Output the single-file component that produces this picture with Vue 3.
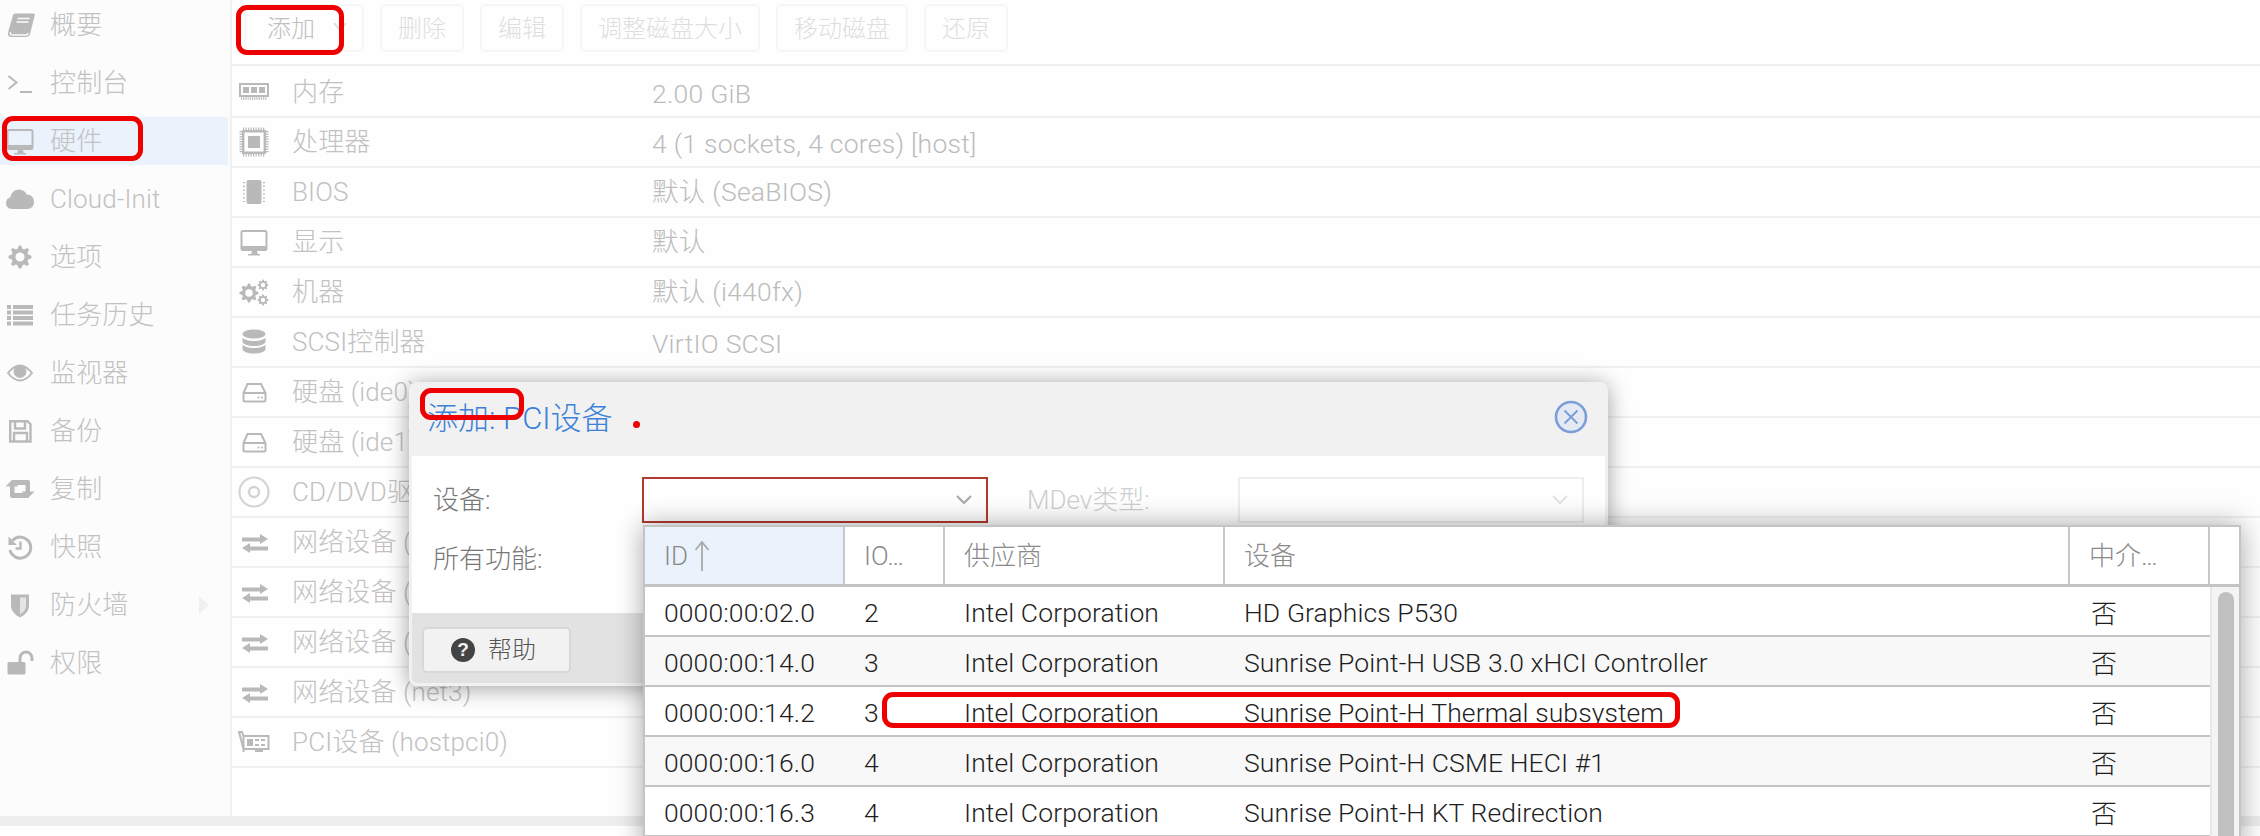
<script setup>
function gear(cx, cy, r, teeth) {
  const out = r, inn = r * 0.74, hole = r * 0.4
  let d = ''
  const n = teeth * 4
  for (let i = 0; i < n; i++) {
    const a = (i / n) * Math.PI * 2 - Math.PI / teeth / 4
    const rad = i % 4 < 2 ? out : inn
    d += (i ? 'L' : 'M') + (cx + rad * Math.cos(a)).toFixed(2) + ' ' + (cy + rad * Math.sin(a)).toFixed(2)
  }
  d += 'Z'
  d += `M${cx + hole} ${cy}a${hole} ${hole} 0 1 0 ${-2 * hole} 0a${hole} ${hole} 0 1 0 ${2 * hole} 0Z`
  return d
}
const gearOne = gear(16, 16, 11.5, 8)
const gearMany = gear(11, 17, 9.5, 8) + gear(25, 9, 5.5, 8) + gear(25, 24, 5.5, 8)
const cjk = (s) => /[\u4e00-\u9fff]/.test(s)

const navItems = [
  { icon: 'book', text: '概要' },
  { icon: 'console', text: '控制台' },
  { icon: 'desktop', text: '硬件', active: true },
  { icon: 'cloud', text: 'Cloud-Init' },
  { icon: 'gear', text: '选项' },
  { icon: 'list', text: '任务历史' },
  { icon: 'eye', text: '监视器' },
  { icon: 'save', text: '备份' },
  { icon: 'retweet', text: '复制' },
  { icon: 'history', text: '快照' },
  { icon: 'shield', text: '防火墙', arrow: true },
  { icon: 'unlock', text: '权限' }
]
const tools = ['删除', '编辑', '调整磁盘大小', '移动磁盘', '还原']
const hw = [
  ['ram', '内存', '2.00 GiB'],
  ['cpu', '处理器', '4 (1 sockets, 4 cores) [host]'],
  ['bios', 'BIOS', '默认 (SeaBIOS)'],
  ['desktop', '显示', '默认'],
  ['gears', '机器', '默认 (i440fx)'],
  ['db', 'SCSI控制器', 'VirtIO SCSI'],
  ['hdd', '硬盘 (ide0)', ''],
  ['hdd', '硬盘 (ide1)', ''],
  ['cd', 'CD/DVD驱动器 (ide2)', ''],
  ['net', '网络设备 (net0)', ''],
  ['net', '网络设备 (net1)', ''],
  ['net', '网络设备 (net2)', ''],
  ['net', '网络设备 (net3)', ''],
  ['pci', 'PCI设备 (hostpci0)', '']
]
const devices = [
  ['0000:00:02.0', '2', 'HD Graphics P530'],
  ['0000:00:14.0', '3', 'Sunrise Point-H USB 3.0 xHCI Controller'],
  ['0000:00:14.2', '3', 'Sunrise Point-H Thermal subsystem'],
  ['0000:00:16.0', '4', 'Sunrise Point-H CSME HECI #1'],
  ['0000:00:16.3', '4', 'Sunrise Point-H KT Redirection']
]
</script>

<template>
  <div class="page">
    <svg class="defs" aria-hidden="true">
      <symbol id="i-book" viewBox="0 0 32 32">
        <path fill="currentColor" d="M11 4.500h18.500c1 0 1.500.8 1.200 2L26 25c-.6 2-2 3-4 3H7c-2 0-3.500-2-3-4.500L9 6.300c.3-1 1-1.800 2-1.800z" />
        <path fill="none" stroke="#fcfcfc" stroke-width="1.500" d="M13.500 9.500h12M12.500 13h12M6.500 23c-.6 2 .2 3 1.500 3h14c1.200 0 1.800-.6 2.200-2" />
      </symbol>
      <symbol id="i-console" viewBox="0 0 32 32">
        <path fill="none" stroke="currentColor" stroke-width="2" d="M4.500 9l8 6.500-8 6.500M16 25h12" />
      </symbol>
      <symbol id="i-desktop" viewBox="0 0 32 32">
        <path fill="currentColor" fill-rule="evenodd" d="M5 4h22a2.500 2.500 0 0 1 2.500 2.500v16a2.500 2.500 0 0 1-2.500 2.500h-8l.8 3H22v1.500H10V28h3.200l.8-3H5a2.500 2.500 0 0 1-2.500-2.500v-16A2.500 2.500 0 0 1 5 4zM4.500 6v14h23V6z" />
      </symbol>
      <symbol id="i-cloud" viewBox="0 0 32 32">
        <path fill="currentColor" d="M8 26C4 26 2 23 2 20c0-2.800 1.800-5 4.400-5.700C7 9.800 10.600 6.500 15 6.500c3.600 0 6.600 2.100 8 5.200 4.300-.5 7 3 7 7.300 0 4-2.800 7-6.500 7z" />
      </symbol>
      <symbol id="i-gear" viewBox="0 0 32 32"><path fill="currentColor" fill-rule="evenodd" :d="gearOne" /></symbol>
      <symbol id="i-gears" viewBox="0 0 32 32"><path fill="currentColor" fill-rule="evenodd" :d="gearMany" /></symbol>
      <symbol id="i-list" viewBox="0 0 32 32">
        <path fill="currentColor" d="M3 6h4v4H3zM9 6h20v4H9zM3 11.500h4v4H3zM9 11.500h20v4H9zM3 17h4v4H3zM9 17h20v4H9zM3 22.500h4v4H3zM9 22.500h20v4H9z" />
      </symbol>
      <symbol id="i-eye" viewBox="0 0 32 32">
        <path fill="none" stroke="currentColor" stroke-width="2" d="M4 16c4-5 7.500-7.500 12-7.500S24 11 28 16c-4 5-7.500 7.500-12 7.500S8 21 4 16z" />
        <circle cx="16" cy="14.500" r="6.500" fill="currentColor" />
      </symbol>
      <symbol id="i-save" viewBox="0 0 32 32">
        <path fill="none" stroke="currentColor" stroke-width="2.400" d="M6.200 6.200h17.300l3 3v17.300H6.200zM11 6.500v7h10v-7M10 26v-8h13v8" />
      </symbol>
      <symbol id="i-retweet" viewBox="0 0 32 32">
        <path fill="currentColor" d="M8 7l6.500 6.500h-4V20H20l4 5H8a2 2 0 0 1-2-2V13.500H1.500zM24 25l-6.500-6.500h4V12H12L8 7h16a2 2 0 0 1 2 2v9.500h4.500z" />
      </symbol>
      <symbol id="i-history" viewBox="0 0 32 32">
        <path fill="none" stroke="currentColor" stroke-width="3" d="M8.500 9.500A10.500 10.500 0 1 1 6 19" />
        <path fill="currentColor" d="M4.500 5.500v8.500h8.500z" />
        <path fill="none" stroke="currentColor" stroke-width="2.400" d="M16.500 10.500v7h-5" />
      </symbol>
      <symbol id="i-shield" viewBox="0 0 32 32">
        <path fill="currentColor" d="M7 5.500h18v11c0 6-4.500 9.500-9 12-4.500-2.500-9-6-9-12z" />
        <path fill="#fcfcfc" fill-opacity=".65" d="M16 8.500v16.800c3-1.800 6-4.300 6-8.800V8.500z" />
      </symbol>
      <symbol id="i-unlock" viewBox="0 0 32 32">
        <path fill="currentColor" d="M5 15h15a1.500 1.500 0 0 1 1.500 1.500V26a1.500 1.500 0 0 1-1.500 1.500H5A1.500 1.500 0 0 1 3.500 26v-9.500A1.500 1.500 0 0 1 5 15z" />
        <path fill="none" stroke="currentColor" stroke-width="3" d="M16 16v-5a6 6 0 0 1 12 0v3" />
      </symbol>
      <symbol id="i-ram" viewBox="0 0 32 32">
        <path fill="currentColor" fill-rule="evenodd" d="M1 7h30v14H1zM3 9v10h26V9z" />
        <path fill="currentColor" d="M5 11h6v6H5zM13 11h6v6h-6zM21 11h6v6h-6z" />
        <path fill="none" stroke="currentColor" stroke-width="2.500" stroke-dasharray="1.200 1" d="M3 22.500h26" />
      </symbol>
      <symbol id="i-cpu" viewBox="0 0 32 32">
        <path fill="none" stroke="currentColor" stroke-width="2.400" d="M5.200 5.200h21.600v21.600H5.200z" />
        <path fill="currentColor" d="M10 10h12v12H10z" />
        <path fill="none" stroke="currentColor" stroke-width="2.600" stroke-dasharray="1.200 1.300" d="M5 2.800h22M5 29.200h22M2.800 5v22M29.200 5v22" />
      </symbol>
      <symbol id="i-bios" viewBox="0 0 32 32">
        <rect x="8.500" y="4" width="15" height="24" rx="2" fill="currentColor" />
        <path fill="none" stroke="currentColor" stroke-width="2" stroke-dasharray="1.200 2.600" d="M6 6v20M26 6v20" />
      </symbol>
      <symbol id="i-db" viewBox="0 0 32 32">
        <ellipse cx="16" cy="8" rx="11.500" ry="4.500" fill="currentColor" />
        <path fill="currentColor" d="M4.500 11.500c1.500 2 6 3.500 11.500 3.500s10-1.500 11.500-3.500v4c0 2.500-5 4.500-11.500 4.500s-11.500-2-11.500-4.500zM4.500 18.500c1.500 2 6 3.500 11.500 3.500s10-1.500 11.500-3.500v4.500c0 2.500-5 4.500-11.500 4.500S4.500 25.500 4.500 23z" />
      </symbol>
      <symbol id="i-hdd" viewBox="0 0 32 32">
        <path fill="none" stroke="currentColor" stroke-width="2" d="M9.500 8h13.500l4.500 9v7a1.500 1.500 0 0 1-1.500 1.500H7A1.500 1.500 0 0 1 5.500 24v-7zM5.500 17h22" />
        <circle cx="20.500" cy="21.500" r="1" fill="currentColor" />
        <circle cx="24" cy="21.500" r="1" fill="currentColor" />
      </symbol>
      <symbol id="i-cd" viewBox="0 0 32 32">
        <circle cx="16" cy="16" r="14.500" fill="none" stroke="currentColor" stroke-width="2.200" />
        <circle cx="16" cy="16" r="5" fill="none" stroke="currentColor" stroke-width="2.400" />
      </symbol>
      <symbol id="i-net" viewBox="0 0 32 32">
        <path fill="currentColor" d="M4 11.500h18V8l8 5-8 5v-2.500H4zM30 20.500H12V17l-8 5 8 5v-2.500h18z" />
      </symbol>
      <symbol id="i-pci" viewBox="0 0 32 32">
        <path fill="none" stroke="currentColor" stroke-width="2" d="M1 6h3l1.500 4h25v13H5.500zM5.500 10v16" />
        <path fill="currentColor" d="M9 13h6v7H9zM17 13h4v2h-4zM23 13h4v2h-4zM17 18h4v2h-4zM23 18h4v2h-4zM17 23h8v3h-8z" />
      </symbol>
    </svg>

    <div class="workspace">
      <nav class="side">
        <div v-for="n in navItems" :key="n.text" class="nav" :class="{ on: n.active }">
          <svg class="ic"><use :href="'#i-' + n.icon" /></svg>
          <span class="nav-text" :class="{ up: cjk(n.text) }">{{ n.text }}</span>
          <span v-if="n.arrow" class="tri"></span>
        </div>
      </nav>
      <section class="main">
        <div class="toolbar">
          <div class="tbtn add">添加<svg class="tchev" viewBox="0 0 14 10"><path d="M1 1l6 7 6-7" fill="none" stroke="#ddd" stroke-width="1.800" /></svg></div>
          <div v-for="t in tools" :key="t" class="tbtn">{{ t }}</div>
        </div>
        <div v-for="(r, i) in hw" :key="i" class="hw">
          <svg class="ic" :class="{ cdi: r[0] === 'cd' }"><use :href="'#i-' + r[0]" /></svg>
          <span class="hw-label" :class="{ up: cjk(r[1]) }">{{ r[1] }}</span>
          <span class="hw-value" :class="cjk(r[2]) ? 'up' : 'down'">{{ r[2] }}</span>
        </div>
      </section>
    </div>
    <div class="strip"></div>

    <div class="dialog">
      <header class="dlg-head">
        <span class="dlg-title">添加: PCI设备</span>
        <svg class="dlg-close" viewBox="0 0 34 34">
          <circle cx="17" cy="17" r="15" fill="#e4e9f4" stroke="#7b9dd8" stroke-width="2.600" />
          <path d="M10.500 10.500l13 13M23.500 10.500l-13 13" stroke="#7b9dd8" stroke-width="1.800" />
        </svg>
      </header>
      <div class="dlg-body">
        <div class="frow">
          <label class="flabel">设备:</label>
          <div class="combo invalid">
            <svg class="chev" viewBox="0 0 16 10"><path d="M1 1l7 7 7-7" fill="none" stroke="#aaa" stroke-width="2.200" /></svg>
          </div>
          <label class="flabel mdev">MDev类型:</label>
          <div class="combo off">
            <svg class="chev" viewBox="0 0 16 10"><path d="M1 1l7 7 7-7" fill="none" stroke="#e4e4e4" stroke-width="2" /></svg>
          </div>
        </div>
        <div class="frow second"><label class="flabel">所有功能:</label></div>
      </div>
      <footer class="dlg-foot">
        <div class="help"><span class="q">?</span><span class="help-text">帮助</span></div>
      </footer>
    </div>

    <div class="drop">
      <div class="dhead">
        <div class="dh sorted">ID<svg class="sort" viewBox="0 0 16 32"><path d="M8 31V2M1.500 10L8 2l6.500 8" fill="none" stroke="#aaa" stroke-width="1.800" /></svg></div>
        <div class="dh">IO…</div>
        <div class="dh"><span class="up">供应商</span></div>
        <div class="dh"><span class="up">设备</span></div>
        <div class="dh"><span class="up">中介…</span></div>
        <div class="dh last"></div>
      </div>
      <div class="dbody">
        <div class="drows">
          <div v-for="d in devices" :key="d[0]" class="drow">
            <span>{{ d[0] }}</span>
            <span>{{ d[1] }}</span>
            <span>Intel Corporation</span>
            <span>{{ d[2] }}</span>
            <span class="no">否</span>
          </div>
        </div>
        <div class="track"><div class="thumb"></div></div>
      </div>
    </div>

    <i class="mark m-add"></i>
    <i class="mark m-hw"></i>
    <i class="mark m-title"></i>
    <i class="dot"></i>
    <i class="mark m-row"></i>
  </div>
</template>

<style scoped>
.page {
  position: relative;
  width: 2260px;
  height: 836px;
  overflow: hidden;
  background: #fff;
  font-family: Roboto, "Liberation Sans", "Noto Sans CJK SC", sans-serif;
  font-weight: 300;
  font-size: 26px;
  color: #222;
}
.defs { position: absolute; width: 0; height: 0; }
.workspace { display: flex; height: 816px; overflow: hidden; }
.strip { height: 10px; background: #eeeeee; }
.ic { width: 32px; height: 32px; flex: none; color: #b9b9b9; }
.up { padding-bottom: 5px; }
.down { padding-top: 2px; }

.side {
  width: 230px;
  flex: none;
  padding-top: 1px;
  background: #fcfcfc;
  border-right: 2px solid #f0f0f0;
  display: flex;
  flex-direction: column;
  gap: 10px;
}
.nav {
  height: 48px;
  width: 228px;
  display: flex;
  align-items: center;
  padding-left: 4px;
  box-sizing: border-box;
  gap: 14px;
  color: #c2c2c2;
  flex: none;
}
.nav.on { background: #eaf2fb; }
.nav-text { flex: none; width: 135px; letter-spacing: 0.15px; }
.tri {
  width: 0;
  height: 0;
  border-left: 10px solid #f0f0f0;
  border-top: 9px solid transparent;
  border-bottom: 9px solid transparent;
}

.main { flex: 1; background: #fefefe; }
.toolbar {
  height: 60px;
  padding: 4px 0 0 12px;
  display: flex;
  gap: 16px;
  border-bottom: 2px solid #efefef;
  margin-bottom: 2px;
}
.tbtn {
  height: 48px;
  box-sizing: border-box;
  padding: 0 16px 3px;
  border: 2px solid #f6f6f6;
  border-radius: 5px;
  display: flex;
  align-items: center;
  font-size: 24px;
  color: #dedede;
  white-space: nowrap;
}
.tbtn.add { width: 120px; padding: 0 8px 3px 21px; color: #c0c0c0; gap: 18px; }
.tchev { width: 14px; height: 10px; flex: none; }
.hw {
  height: 50px;
  box-sizing: border-box;
  border-bottom: 2px solid #f0f0f0;
  display: flex;
  align-items: center;
  padding-left: 6px;
  color: #c2c2c2;
}
.hw .ic { margin-right: 22px; }
.hw-label { width: 360px; flex: none; letter-spacing: 0.15px; }
.hw-value { color: #bcbcbc; font-size: 26.500px; letter-spacing: 0.25px; }
.cdi { color: #d4d4d4; }

.dialog {
  position: absolute;
  left: 409px;
  top: 382px;
  width: 1199px;
  height: 304px;
  box-sizing: border-box;
  display: flex;
  flex-direction: column;
  background: #f1f1f1;
  border-radius: 8px;
  border: solid #f1f1f1;
  border-width: 0 3px 3px;
  box-shadow: 0 2px 22px rgba(0, 0, 0, 0.38);
  overflow: hidden;
}
.dlg-head {
  height: 74px;
  flex: none;
  display: flex;
  align-items: center;
  justify-content: space-between;
  padding: 0 17px 4px 15px;
  box-sizing: border-box;
}
.dlg-title { font-size: 31px; color: #3d82d8; padding-bottom: 4px; }
.dlg-close { width: 34px; height: 34px; }
.dlg-body { flex: 1; background: #fff; padding: 21px 0 0 21px; }
.frow { display: flex; align-items: center; height: 46px; }
.frow.second { margin-top: 13px; }
.flabel { width: 209px; flex: none; color: #777; font-size: 26px; padding-bottom: 5px; box-sizing: border-box; }
.flabel.mdev { width: 209px; margin-left: 39px; margin-right: 2px; color: #cfcfcf; }
.combo {
  width: 346px;
  height: 46px;
  box-sizing: border-box;
  border: 2px solid;
  display: flex;
  align-items: center;
  justify-content: flex-end;
  padding-right: 14px;
  background: #fff;
}
.combo.invalid { border-color: #b23a2e; }
.combo.off { border-color: #eeeeee; }
.chev { width: 16px; height: 10px; }
.dlg-foot {
  height: 70px;
  flex: none;
  background: #e2e2e2;
  padding: 14px 0 0 10px;
  box-sizing: border-box;
}
.help {
  width: 149px;
  height: 46px;
  box-sizing: border-box;
  border: 2px solid #d8d8d8;
  border-radius: 5px;
  background: #f2f2f2;
  display: flex;
  align-items: center;
  padding-left: 27px;
  gap: 13px;
  font-size: 24px;
  color: #555;
}
.help-text { padding-bottom: 5px; }
.q {
  width: 24px;
  height: 24px;
  border-radius: 50%;
  background: #444;
  color: #f2f2f2;
  font: 700 19px/24px "Liberation Sans", sans-serif;
  text-align: center;
  flex: none;
}

.drop {
  position: absolute;
  left: 643px;
  top: 525px;
  width: 1598px;
  height: 330px;
  box-sizing: border-box;
  border: 2px solid #c4c4c4;
  background: #fff;
  box-shadow: 0 0 26px rgba(0, 0, 0, 0.35);
}
.dhead {
  display: grid;
  grid-template-columns: 200px 100px 280px 845px 140px 29px;
  height: 60px;
  box-sizing: border-box;
  border-bottom: 3px solid #c4c4c4;
}
.dh {
  display: flex;
  align-items: center;
  padding-left: 19px;
  box-sizing: border-box;
  border-right: 2px solid #c8c8c8;
  color: #8a8a8a;
  gap: 6px;
}
.dh.sorted { background: #eaf2fb; }
.dh.last { border-right: 0; }
.sort { width: 16px; height: 32px; }
.dbody { display: flex; }
.drows { width: 1565px; flex: none; }
.drow {
  display: grid;
  grid-template-columns: 200px 100px 280px 845px 140px;
  height: 50px;
  box-sizing: border-box;
  border-bottom: 2px solid #c4c4c4;
  align-items: center;
  font-size: 26.500px;
  letter-spacing: 0.1px;
}
.drow:nth-child(even) { background: #f8f8f8; }
.drow span { padding: 2px 0 0 19px; white-space: nowrap; color: #1e1e1e; }
.drow .no { padding: 0 0 0 21px; font-size: 26px; }
.track {
  flex: 1;
  height: 270px;
  background: #f4f4f4;
  border-left: 2px solid #e8e8e8;
  padding: 5px 0 0 6px;
  box-sizing: border-box;
}
.thumb { width: 16px; height: 270px; border-radius: 8px; background: #c0c0c0; }

.mark {
  position: absolute;
  box-sizing: border-box;
  border: 5.500px solid #ee0000;
  border-radius: 11px;
}
.m-add { left: 236px; top: 5px; width: 108px; height: 50px; }
.m-hw { left: 2px; top: 116px; width: 141px; height: 45px; }
.m-title { left: 420px; top: 388px; width: 104px; height: 32px; }
.m-row { left: 882px; top: 692px; width: 798px; height: 36px; }
.dot {
  position: absolute;
  left: 633px;
  top: 421px;
  width: 7px;
  height: 7px;
  border-radius: 50%;
  background: #ee0000;
}
</style>
